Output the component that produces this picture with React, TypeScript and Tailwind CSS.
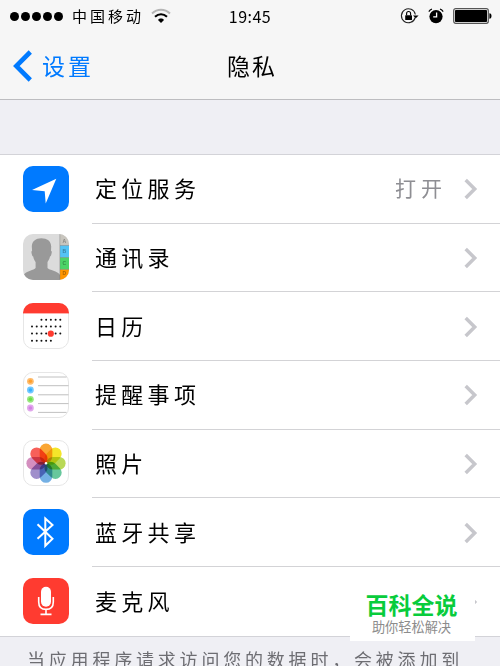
import type { ReactNode } from 'react';

const LocationIcon = () => (
  <svg viewBox="0 0 46 46" className="w-full h-full">
    <rect width="46" height="46" rx="10" fill="#007aff" />
    <path d="M33.3 12.8 9 24l12.7 1.2L22.7 37.5Z" fill="#fff" />
  </svg>
);

const ContactsIcon = () => (
  <svg viewBox="0 0 46 46" className="w-full h-full">
    <defs>
      <clipPath id="contacts">
        <rect width="46" height="46" rx="10" />
      </clipPath>
    </defs>
    <g clipPath="url(#contacts)">
      <rect width="46" height="46" fill="#dcdcdc" />
      <path
        d="M18.3 4.2c5.8 0 9.8 2.9 9.9 8.3l-.2 4.2c1 .2.9 1.5.5 3-.3 1.5-.7 2.6-1.5 2.8-.4 2.4-1.8 4.4-2.5 5.5v6.1c1.6 2.2 10.3 3 12.5 6.8V46H1v-5.4c2.5-3.6 10-4.4 11.6-6.6v-6c-.9-1.2-2-3-2.4-5.5-.8-.2-1.2-1.3-1.5-2.8-.4-1.5-.4-2.8.4-3l-.3-4.2c.1-5.3 4-8.3 9.5-8.3Z"
        fill="#999"
      />
      <rect x="37" width="9" height="11.5" fill="#c8c5be" />
      <rect x="37" y="11.5" width="9" height="12" fill="#54c3f5" />
      <rect x="37" y="23.5" width="9" height="12" fill="#4cd468" />
      <rect x="37" y="35.5" width="9" height="11" fill="#ff9500" />
      <path d="M36.8 0v46M37 11.5h9M37 23.5h9M37 35.5h9" stroke="#777" strokeOpacity=".6" strokeWidth=".7" />
      <g fontSize="5" fontWeight="bold" fill="#000" fillOpacity=".35" textAnchor="middle" fontFamily="Liberation Sans, sans-serif">
        <text x="41.3" y="9.2">A</text>
        <text x="41.3" y="19.4">B</text>
        <text x="41.3" y="31.3">C</text>
        <text x="41.3" y="41">D</text>
      </g>
    </g>
  </svg>
);

// first column and number of dots for each week
const weeks = [
  { y: 16.7, start: 2, count: 5 },
  { y: 23.6, start: 0, count: 7 },
  { y: 30.6, start: 0, count: 7 },
  { y: 37.8, start: 0, count: 5 },
];

const CalendarIcon = () => (
  <svg viewBox="0 0 46 46" className="w-full h-full">
    <defs>
      <clipPath id="calendar">
        <rect width="46" height="46" rx="10" />
      </clipPath>
    </defs>
    <rect x=".5" y=".5" width="45" height="45" rx="9.5" fill="#fff" stroke="#e6e6e6" />
    <rect width="46" height="10.4" fill="#ff3b30" clipPath="url(#calendar)" />
    {weeks.map((week) =>
      Array.from({ length: week.count }, (_, i) => (
        <circle key={`${week.y}-${i}`} cx={9 + (week.start + i) * 4.72} cy={week.y} r="1" fill="#111" />
      ))
    )}
    <circle cx="27.8" cy="30.7" r="3.1" fill="#ff3b30" />
  </svg>
);

const reminders = [
  { y: 9.3, color: '#ff9f2e' },
  { y: 18, color: '#35b0ff' },
  { y: 27.3, color: '#6cdd48' },
  { y: 36, color: '#d481e4' },
];

const RemindersIcon = () => (
  <svg viewBox="0 0 46 46" className="w-full h-full">
    <rect x=".5" y=".5" width="45" height="45" rx="9.5" fill="#fff" stroke="#e6e6e6" />
    {reminders.map((item) => (
      <g key={item.color} fill={item.color}>
        <circle cx="7.4" cy={item.y} r="3.4" fillOpacity=".7" />
        <circle cx="7.4" cy={item.y} r="1.8" />
      </g>
    ))}
    <path d="M15 5h28.5M15 13.7h30.5M15 22.8h30.5M15 31.6h30.5M15 40.4h28.5" stroke="#b9b9b9" strokeWidth=".9" />
  </svg>
);

const petals = ['#faa634', '#f4e52a', '#b9d957', '#67c79c', '#74b0e4', '#a08fcb', '#d48fbf', '#f7605a'];

const PhotosIcon = () => (
  <svg viewBox="0 0 46 46" className="w-full h-full">
    <rect x=".5" y=".5" width="45" height="45" rx="9.5" fill="#fff" stroke="#e6e6e6" />
    <g className="isolate">
      {petals.map((color, i) => (
        <rect
          key={color}
          x="16.7"
          y="3.6"
          width="12.6"
          height="19.2"
          rx="6.3"
          fill={color}
          transform={`rotate(${i * 45} 23 23.2)`}
          className="mix-blend-multiply"
        />
      ))}
    </g>
    <circle cx="23" cy="23.2" r="1.2" fill="#fff" />
  </svg>
);

const BluetoothIcon = () => (
  <svg viewBox="0 0 46 46" className="w-full h-full">
    <rect width="46" height="46" rx="10" fill="#007aff" />
    <path d="m14.5 15.3 15 14.5-7.2 7V9.6l7.2 6.5-15 13.6" fill="none" stroke="#fff" strokeWidth="2" />
  </svg>
);

const MicrophoneIcon = () => (
  <svg viewBox="0 0 46 46" className="w-full h-full">
    <rect width="46" height="46" rx="10" fill="#ff3b30" />
    <rect x="18" y="8.8" width="10" height="20" rx="5" fill="#fff" />
    <path d="M15.7 19v5c0 4.6 2.8 7.4 7.3 7.4s7.3-2.8 7.3-7.4v-5M23 31.4v4.9M17.5 36.4h11" fill="none" stroke="#fff" strokeWidth="1.6" />
  </svg>
);

const Chevron = () => (
  <svg viewBox="0 0 14 22" className="w-3.5 h-[22px] mt-px shrink-0">
    <path d="m1.7 2 9 9-9 9" fill="none" stroke="#c7c7cc" strokeWidth="3.5" />
  </svg>
);

type Item = { label: string; icon: ReactNode; value?: string; last?: boolean };

const items: Item[] = [
  { label: '定位服务', icon: <LocationIcon />, value: '打开' },
  { label: '通讯录', icon: <ContactsIcon /> },
  { label: '日历', icon: <CalendarIcon /> },
  { label: '提醒事项', icon: <RemindersIcon /> },
  { label: '照片', icon: <PhotosIcon /> },
  { label: '蓝牙共享', icon: <BluetoothIcon /> },
  { label: '麦克风', icon: <MicrophoneIcon />, last: true },
];

const StatusBar = () => (
  <div className="h-8 grid grid-cols-[1fr_auto_1fr] items-center pl-2.5 pr-2">
    <div className="flex items-center">
      <div className="flex gap-[2px]">
        {[0, 1, 2, 3, 4].map((dot) => (
          <span key={dot} className="size-[9px] rounded-full bg-black" />
        ))}
      </div>
      <span className="ml-[9px] text-[15px] leading-5 tracking-[3px] font-normal">中国移动</span>
      <svg viewBox="0 0 20 16" className="w-5 h-4 ml-[7px]">
        <path d="M1 5.6c5.4-5 12.6-5 18 0" fill="none" stroke="#b5b5b5" strokeWidth="2" />
        <path d="M4 8.8c3.7-3.4 8.3-3.4 12 0" fill="none" stroke="#000" strokeWidth="2.1" />
        <path d="M7 12c1.6-1.9 4.4-1.9 6 0l-3 3Z" />
      </svg>
    </div>
    <span className="pr-0.5 text-[16px] leading-5 tracking-[0.5px] font-normal">19:45</span>
    <div className="flex items-center justify-end">
      <svg viewBox="0 0 19 16" className="w-[19px] h-4">
        <path d="M15.2 9.5a7 7 0 1 1 .1-3" fill="none" stroke="#222" strokeWidth="1.1" />
        <path d="M13 7.4h5.6l-2.8 2.8Z" />
        <rect x="5.2" y="7.2" width="6.8" height="4.8" rx=".5" />
        <path d="M6.6 7.3V5.5a2 2 0 0 1 4 0v1.8" fill="none" stroke="#000" strokeWidth="1.1" />
      </svg>
      <svg viewBox="0 0 16 16" className="size-4 ml-[9px]">
        <circle cx="8" cy="8.6" r="6.6" />
        <path d="M.8 3.6Q2 1.6 4 .9M15.2 3.6Q14 1.6 12 .9" fill="none" stroke="#000" strokeWidth="1.1" />
        <path d="M8.6 4.5v4.4H5.2" fill="none" stroke="#fff" strokeWidth="1.3" />
      </svg>
      <svg viewBox="0 0 39 16" className="w-[39px] h-4 ml-[9px]">
        <rect x=".7" y=".7" width="34.6" height="14.6" rx="2" fill="none" stroke="#555" strokeWidth="1.2" />
        <rect x="2" y="2" width="32" height="12" rx=".8" />
        <path d="M36.4 5.2c2.8 0 2.8 5.6 0 5.6Z" />
      </svg>
    </div>
  </div>
);

const Row = ({ label, icon, value, last }: Item) => (
  <div className="flex h-[68.67px] pl-[23px]">
    <div className="flex items-center w-[69px] shrink-0 pb-px">
      <div className="size-[46px]">{icon}</div>
    </div>
    <div className={`flex flex-1 items-center pl-[3px] pr-[22px] ${last ? '' : 'border-b border-[#d3d3d6]'}`}>
      <span className="flex-1 pb-[3px] text-[22px] leading-8 tracking-[4.3px]">{label}</span>
      {value && <span className="pb-[3px] text-[21px] leading-8 tracking-[5px] text-[#8e8e93] mr-[17px]">{value}</span>}
      <Chevron />
    </div>
  </div>
);

const App = () => {
  return (
    <div className="relative w-[500px] h-[666px] overflow-hidden bg-[#efeff4] text-black font-normal font-['Noto_Sans_CJK_SC',sans-serif]">
      <header className="h-[100px] bg-[#f6f6f6] border-b border-[#bdbdc0]">
        <StatusBar />
        <div className="h-[66px] grid grid-cols-3 items-center">
          <div className="flex items-center pl-3 text-[#007aff]">
            <svg viewBox="0 0 21 32" className="w-[21px] h-8 mt-px">
              <path d="M18.3 2 4.3 16l14 14" fill="none" stroke="currentColor" strokeWidth="4.6" />
            </svg>
            <span className="ml-[9px] pb-px text-[23px] leading-8 tracking-[3px]">设置</span>
          </div>
          <h1 className="pl-1 pb-px text-center text-[23px] leading-8 tracking-[2px]">隐私</h1>
        </div>
      </header>

      <main className="mt-[54px] bg-white border-y border-[#d3d3d8]">
        {items.map((item) => (
          <Row key={item.label} {...item} />
        ))}
      </main>

      <p className="pl-[27px] pt-[9px] text-[18px] leading-[26px] tracking-[3.8px] whitespace-nowrap text-[#6d6d72]">
        当应用程序请求访问您的数据时，会被添加到
      </p>

      <div className="absolute left-[350px] top-[583px] w-[125px] h-[58px] bg-white flex flex-col items-center">
        <span className="mt-[7px] mr-0.5 text-[23px] leading-7 font-bold text-[#08cc3c]">百科全说</span>
        <span className="mr-0.5 text-[13.2px] leading-[17px] text-[#8c8c8c]">助你轻松解决</span>
      </div>
    </div>
  );
};

export default App;
